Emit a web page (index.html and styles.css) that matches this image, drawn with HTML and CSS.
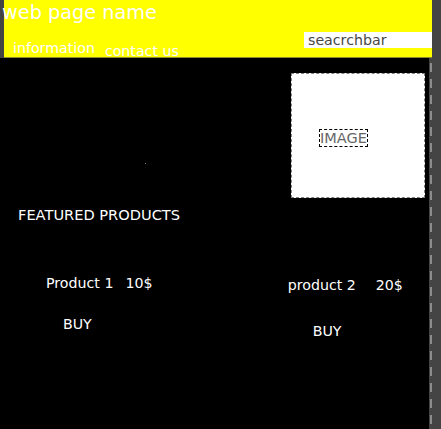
FILE: index.html
```html
<!DOCTYPE html>
<html lang="en">
<head>
<meta charset="utf-8">
<title>web page name</title>
<link rel="stylesheet" href="styles.css">
</head>
<body>
<div class="page">
  <header class="top">
    <h1 class="site-name">web page name</h1>
    <div class="top-row">
      <nav class="nav">
        <a class="nav-link nav-link-a" href="#">information</a>
        <a class="nav-link nav-link-b" href="#">contact us</a>
      </nav>
      <input class="search" type="text" value="seacrchbar">
    </div>
  </header>
  <div class="main-row">
    <main class="content">
      <section class="hero">
        <div class="hero-left"><span class="dot"></span></div>
        <div class="image-box"><span class="image-label">IMAGE</span></div>
      </section>
      <h2 class="featured">FEATURED PRODUCTS</h2>
      <section class="products">
        <div class="card card-a">
          <div class="card-line"><span>Product 1</span><span>10$</span></div>
          <div class="buy">BUY</div>
        </div>
        <div class="card card-b">
          <div class="card-line"><span>product 2</span><span>20$</span></div>
          <div class="buy">BUY</div>
        </div>
      </section>
    </main>
    <div class="rail"><div class="rail-line"></div></div>
  </div>
</div>
</body>
</html>
```

FILE: styles.css
```css
* { box-sizing: border-box; }

html, body {
  margin: 0;
  padding: 0;
}

body {
  background: #444444;
  font-family: "DejaVu Sans", Verdana, sans-serif;
  color: #ffffff;
}

.page {
  display: flex;
  flex-direction: column;
  min-height: 100vh;
}

.top {
  margin-left: 4px;
  width: 428px;
  height: 58px;
  background: #ffff00;
  border-bottom: 1px solid #8a8a30;
  display: flex;
  flex-direction: column;
}

.site-name {
  margin: 2px 0 0 -2px;
  font-size: 19.3px;
  line-height: 22px;
  font-weight: normal;
  color: #ffffff;
}

.top-row {
  margin-top: 8px;
  display: flex;
  justify-content: space-between;
  align-items: flex-start;
}

.nav {
  display: flex;
  align-items: flex-start;
  gap: 10px;
  padding-left: 9px;
}

.nav-link {
  color: #ffffff;
  text-decoration: none;
  font-size: 14.2px;
  line-height: normal;
}

.nav-link-a { margin-top: 8px; }
.nav-link-b { margin-top: 11px; }

.search {
  width: 128px;
  height: 16px;
  border: 0;
  outline: none;
  margin: 0;
  padding: 0 0 0 4px;
  background: #ffffff;
  color: #474747;
  font-family: "DejaVu Sans", Verdana, sans-serif;
  font-size: 14.2px;
}

.main-row {
  display: flex;
  flex: 1;
}

.content {
  width: 429px;
  background: #000000;
  padding: 15px 4px 0 18px;
}

.rail {
  flex: 1;
  padding-left: 1px;
}

.rail-line {
  width: 2px;
  height: 100%;
  background: repeating-linear-gradient(to bottom,
    transparent 0 5px,
    #8c8c8c 5px 14px,
    transparent 14px 16px);
}

.hero {
  display: flex;
  justify-content: space-between;
}

.hero-left {
  padding: 90px 0 0 127px;
}

.dot {
  display: block;
  width: 1px;
  height: 1px;
  background: #7a7a7a;
}

.image-box {
  width: 134px;
  height: 125px;
  background: #ffffff;
  border: 1px dashed #808080;
  padding: 54px 0 0 27px;
}

.image-label {
  display: inline-block;
  border: 1px dashed #000000;
  color: #666666;
  font-size: 14.5px;
  line-height: normal;
}

.featured {
  margin: 7.5px 0 0 0;
  font-size: 14.6px;
  line-height: normal;
  font-weight: normal;
  color: #ffffff;
}

.products {
  margin-top: 52px;
  padding-left: 28px;
  display: grid;
  grid-template-columns: 241.7px auto;
  align-items: start;
  font-size: 14.2px;
  line-height: normal;
}

.card-line {
  display: flex;
}

.card-a .card-line { gap: 12px; }
.card-b .card-line { gap: 20px; }

.card-b { margin-top: 2px; }

.card-a .buy { margin: 25px 0 0 17px; }
.card-b .buy { margin: 30px 0 0 25px; }
```
